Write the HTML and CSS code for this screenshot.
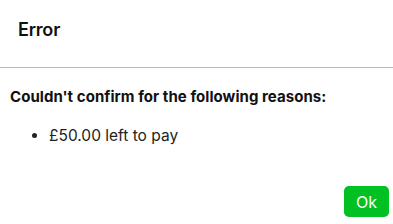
FILE: index.html
```html
<!DOCTYPE html>
<html lang="en">
<head>
    <meta charset="UTF-8">
    <meta name="viewport" content="width=device-width, initial-scale=1.0">
    <title>Error</title>
    <link rel="stylesheet" href="styles.css">
</head>
<body>
    <div class="dialog">
        <div class="dialog-header">
            <h2>Error</h2>
        </div>
        <div class="dialog-body">
            <h3>Couldn't confirm for the following reasons:</h3>
            <ul class="reasons">
                <li>£50.00 left to pay</li>
            </ul>
        </div>
        <div class="dialog-footer">
            <button class="ok-btn">Ok</button>
        </div>
    </div>
</body>
</html>
```

FILE: styles.css
```css
body {
    margin: 0;
    font-family: Inter, "Noto Sans", sans-serif;
    color: #111;
    background: #fff;
}
.dialog {
    width: 393px;
    height: 224px;
    display: flex;
    flex-direction: column;
}
.dialog-header {
    height: 48px;
    border-bottom: 1px solid #bbb;
    padding: 19px 18px 0;
}
.dialog-header h2 {
    margin: 0;
    font-size: 18px;
    line-height: 22px;
    font-weight: 600;
    letter-spacing: -0.2px;
}
.dialog-body {
    padding: 19px 10px 0;
}
.dialog-body h3 {
    margin: 0;
    font-size: 15px;
    font-weight: 700;
    line-height: 20px;
    letter-spacing: 0.05px;
}
.reasons {
    margin: 19px 0 0;
    padding-left: 39px;
    font-size: 15.5px;
    line-height: 20px;
    color: #222;
}
.dialog-footer {
    margin-top: auto;
    padding: 0 4px 7px 0;
    display: flex;
    justify-content: flex-end;
}
.ok-btn {
    width: 45px;
    height: 31px;
    border: none;
    border-radius: 5px;
    background: #00c121;
    color: #fff;
    font-family: inherit;
    font-size: 16px;
    cursor: pointer;
}
```
